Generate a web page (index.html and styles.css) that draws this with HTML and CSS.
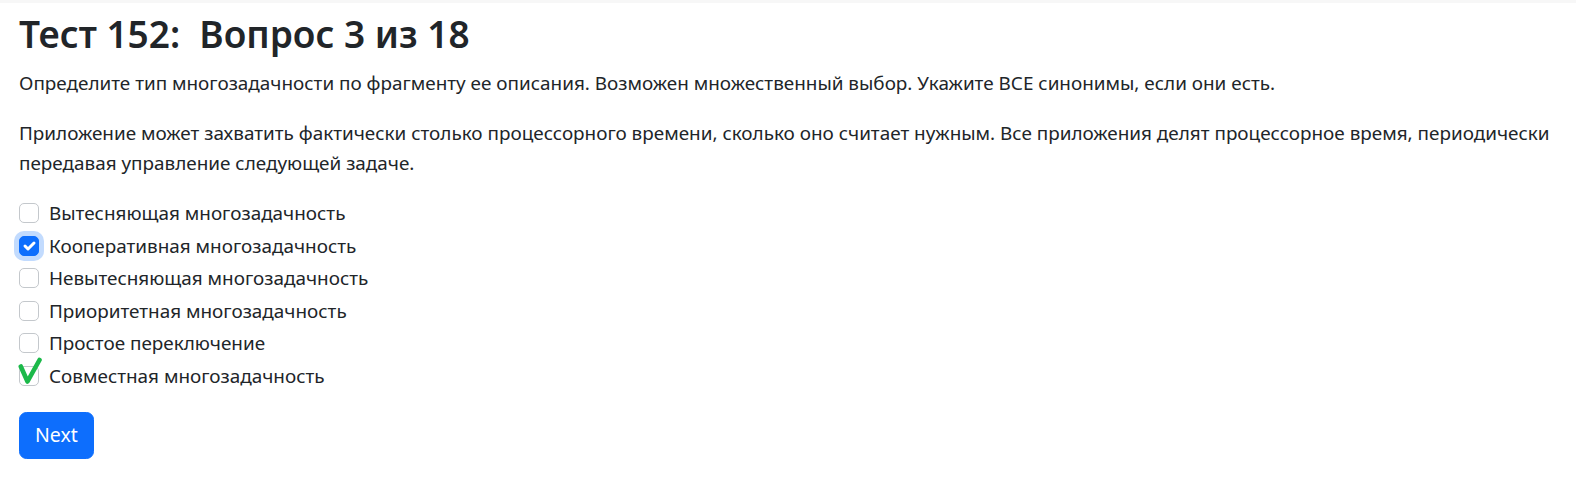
FILE: index.html
```html
<!DOCTYPE html>
<html lang="ru">
<head>
<meta charset="utf-8">
<title>Тест 152</title>
<link rel="stylesheet" href="styles.css">
</head>
<body>
<div class="topbar"></div>
<main class="page">
  <h2 class="title">Тест 152:&nbsp; Вопрос 3 из 18</h2>
  <p>Определите тип многозадачности по фрагменту ее описания. Возможен множественный выбор. Укажите ВСЕ синонимы, если они есть.</p>
  <p>Приложение может захватить фактически столько процессорного времени, сколько оно считает нужным. Все приложения делят процессорное время, периодически передавая управление следующей задаче.</p>
  <div class="options">
    <label class="check"><span class="box"></span><span>Вытесняющая многозадачность</span></label>
    <label class="check"><span class="box checked"><svg viewBox="0 0 20 20" width="20" height="20"><path d="M6 10l3 3 6-6" fill="none" stroke="#fff" stroke-width="3" stroke-linecap="round" stroke-linejoin="round"/></svg></span><span>Кооперативная многозадачность</span></label>
    <label class="check"><span class="box"></span><span>Невытесняющая многозадачность</span></label>
    <label class="check"><span class="box"></span><span>Приоритетная многозадачность</span></label>
    <label class="check"><span class="box"></span><span>Простое переключение</span></label>
    <label class="check"><span class="box"></span><svg class="mark" viewBox="0 0 26 28" width="26" height="28"><path d="M3.8 9.5 L10.5 24.5 L22.5 3" fill="none" stroke="#1cb94a" stroke-width="4.6" stroke-linecap="round" stroke-linejoin="round"/></svg><span>Совместная многозадачность</span></label>
  </div>
  <button class="btn">Next</button>
</main>
</body>
</html>
```
FILE: styles.css
```css
html, body {
  margin: 0;
  padding: 0;
  background: #fff;
}
body {
  font-family: "Noto Sans", "Open Sans", sans-serif;
  font-size: 18.9px;
  line-height: 30px;
  color: #212529;
}
.topbar {
  height: 3px;
  background: #f7f7f7;
}
.page {
  padding: 7px 19px 0 19px;
}
.title {
  margin: 0 0 10px 0;
  font-size: 37px;
  line-height: 48px;
  font-weight: 600;
}
p {
  margin: 0 0 20px 0;
}
.options {
  margin-bottom: 20px;
}
.check {
  position: relative;
  display: flex;
  align-items: flex-start;
  gap: 10px;
  min-height: 30px;
  margin-bottom: 2.5px;
}
.box {
  flex: none;
  width: 20px;
  height: 20px;
  margin-top: 5px;
  box-sizing: border-box;
  border: 1px solid #c4c8cc;
  border-radius: 5px;
  background: #fff;
}
.box.checked {
  background: #0d6efd;
  border-color: #0d6efd;
  box-shadow: 0 0 0 5px rgba(13, 110, 253, 0.25);
}
.box svg {
  display: block;
  margin: -1px;
}
.mark {
  position: absolute;
  left: -2px;
  top: -4px;
}
.btn {
  font-family: inherit;
  font-size: 19.5px;
  line-height: 30px;
  color: #fff;
  background: #0d6efd;
  border: 1px solid #0d6efd;
  border-radius: 7.5px;
  padding: 7.5px 15px;
  margin-top: 1px;
}
```
